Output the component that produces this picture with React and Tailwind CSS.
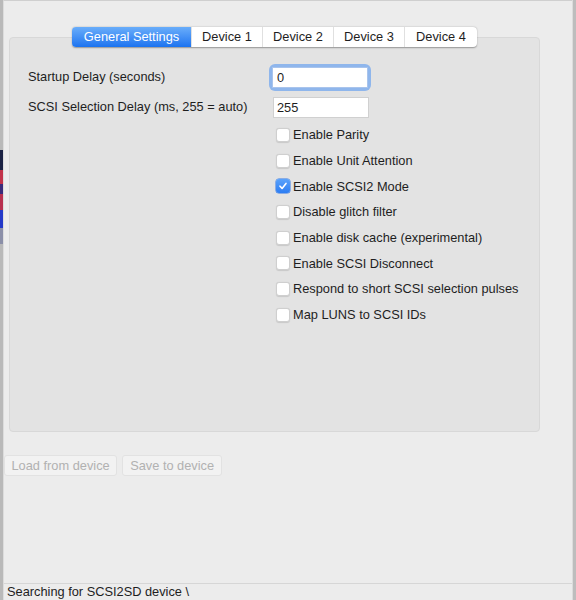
import React, { useState } from "react";

const FONT = { fontFamily: '"Liberation Sans", Arial, sans-serif' };

const tabs = ["General Settings", "Device 1", "Device 2", "Device 3", "Device 4"];

const options = [
  ["Enable Parity", false],
  ["Enable Unit Attention", false],
  ["Enable SCSI2 Mode", true],
  ["Disable glitch filter", false],
  ["Enable disk cache (experimental)", false],
  ["Enable SCSI Disconnect", false],
  ["Respond to short SCSI selection pulses", false],
  ["Map LUNS to SCSI IDs", false],
];

function Check({ on }) {
  if (on) {
    return (
      <span className="w-[14px] h-[14px] rounded-[3px] bg-gradient-to-b from-[#5aa2fb] to-[#2c7df3] flex items-center justify-center shadow-[0_0_0_0.5px_#3478e6]">
        <svg width="10" height="10" viewBox="0 0 10 10">
          <path d="M2 5.2 L4.1 7.4 L8 2.4" fill="none" stroke="#fff" strokeWidth="1.6" strokeLinecap="round" strokeLinejoin="round" />
        </svg>
      </span>
    );
  }
  return <span className="w-[14px] h-[14px] rounded-[3px] bg-white border border-[#cfcfcf] shadow-[0_0.5px_1px_rgba(0,0,0,0.12)]" />;
}

export default function App() {
  const [active, setActive] = useState(0);
  const [opts, setOpts] = useState(options.map(([, v]) => v));

  return (
    <div className="w-[576px] h-[600px] flex bg-[#ececec] text-[12.8px] text-[#1e1e1e] overflow-hidden" style={FONT}>
      {/* window behind, peeking out on the left */}
      <div className="w-[3px] flex flex-col bg-[#b9b9b9]">
        <div className="h-[150px]" />
        <div className="h-[20px] bg-[#1c2244]" />
        <div className="h-[14px] bg-[#c2334a]" />
        <div className="h-[10px] bg-[#3a2a7a]" />
        <div className="h-[16px] bg-[#b8304f]" />
        <div className="h-[18px] bg-[#2338c8]" />
        <div className="h-[16px] bg-[#8b8fa8]" />
        <div className="flex-1" />
      </div>

      <div className="flex-1 flex flex-col border-t border-[#cfcfcf] border-l border-l-[#dcdcdc]">
        {/* tab strip */}
        <div className="relative z-10 flex justify-center pt-[26px] pr-[27px]">
          <div className="flex h-[20px] rounded-[4px] bg-white shadow-[0_0.5px_1.5px_rgba(0,0,0,0.35)] overflow-hidden">
            {tabs.map((t, i) => (
              <button
                key={t}
                onClick={() => setActive(i)}
                className={`h-full flex items-center justify-center ${i === 0 ? "w-[119px]" : i === 4 ? "w-[73px]" : "w-[71px]"} ${
                  active === i
                    ? "bg-gradient-to-b from-[#69adfa] to-[#1a73f0] text-white"
                    : "text-[#1e1e1e] border-l border-[#e0e0e0]"
                } ${active === i && i > 0 ? "border-l-0" : ""}`}
              >
                {t}
              </button>
            ))}
          </div>
        </div>

        {/* settings box */}
        <div className="-mt-[10px] ml-[5px] w-[531px] h-[395px] rounded-[4px] bg-[#e3e3e3] border border-[#d8d8d8] pl-[18px] pt-[27px]">
          <div className="flex items-center h-[24px]">
            <span className="w-[244px]">Startup Delay (seconds)</span>
            <div className="rounded-[3px] shadow-[0_0_0_3px_#8fb6ec]">
              <input defaultValue="0" className="w-[96px] h-[21px] bg-white px-[4px] outline-none border border-[#a9c4ec]" style={FONT} />
            </div>
          </div>
          <div className="flex items-center h-[24px] mt-[6px]">
            <span className="w-[245px]">SCSI Selection Delay (ms, 255 = auto)</span>
            <input defaultValue="255" className="w-[96px] h-[21px] bg-white px-[3px] outline-none border border-[#d0d0d0]" style={FONT} />
          </div>
          <div className="ml-[248px] mt-[3px]">
            {options.map(([label], i) => (
              <label
                key={label}
                className="h-[25.7px] flex items-center gap-[3px] cursor-default"
                onClick={() => setOpts(o => o.map((v, j) => (j === i ? !v : v)))}
              >
                <Check on={opts[i]} />
                <span>{label}</span>
              </label>
            ))}
          </div>
        </div>

        {/* device actions */}
        <div className="flex gap-[5px] mt-[23px]">
          <button disabled className="h-[21px] px-[6.5px] rounded-[3px] bg-[#f2f2f2] border border-[#e2e2e2] text-[#b1b1b1]">
            Load from device
          </button>
          <button disabled className="h-[21px] px-[7px] rounded-[3px] bg-[#f2f2f2] border border-[#e2e2e2] text-[#b1b1b1]">
            Save to device
          </button>
        </div>

        <div className="flex-1" />

        {/* status bar */}
        <div className="h-[17px] border-t border-[#d6d6d6] flex items-center pl-[3px] pb-[1px]">
          Searching for SCSI2SD device \
        </div>
      </div>

      {/* right window edge */}
      <div className="w-[4px] border-l border-[#dcdcdc] bg-[#bdbdbd]" />
    </div>
  );
}
